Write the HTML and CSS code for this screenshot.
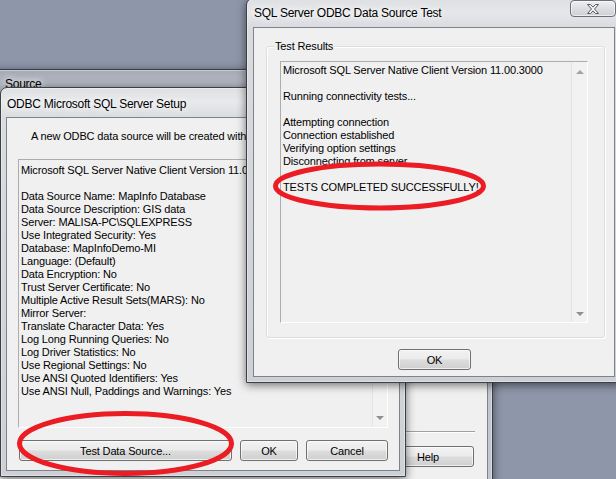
FILE: index.html
```html
<!DOCTYPE html>
<html lang="en">
<head>
<meta charset="utf-8">
<title>ODBC Data Source Test</title>
<link rel="stylesheet" href="styles.css">
</head>
<body>
<div class="desktop">

  <section class="win win-admin">
    <header class="title">Source</header>
    <div class="client admin-client">
      <div class="admin-pane"></div>
      <div class="etched"></div>
      <div class="admin-btns"><button class="btn btn-help">Help</button></div>
    </div>
  </section>

  <section class="win win-setup">
    <header class="title">ODBC Microsoft SQL Server Setup</header>
    <div class="client">
      <div class="intro">A new ODBC data source will be created with the following configuration:</div>
      <div class="textbox setup-box">
        <div class="tb-text">
          <div class="ln">Microsoft SQL Server Native Client Version 11.00.3000</div>
          <div class="ln">&nbsp;</div>
          <div class="ln">Data Source Name: MapInfo Database</div>
          <div class="ln">Data Source Description: GIS data</div>
          <div class="ln">Server: MALISA-PC\SQLEXPRESS</div>
          <div class="ln">Use Integrated Security: Yes</div>
          <div class="ln">Database: MapInfoDemo-MI</div>
          <div class="ln">Language: (Default)</div>
          <div class="ln">Data Encryption: No</div>
          <div class="ln">Trust Server Certificate: No</div>
          <div class="ln">Multiple Active Result Sets(MARS): No</div>
          <div class="ln">Mirror Server:</div>
          <div class="ln">Translate Character Data: Yes</div>
          <div class="ln">Log Long Running Queries: No</div>
          <div class="ln">Log Driver Statistics: No</div>
          <div class="ln">Use Regional Settings: No</div>
          <div class="ln">Use ANSI Quoted Identifiers: Yes</div>
          <div class="ln">Use ANSI Null, Paddings and Warnings: Yes</div>
        </div>
        <div class="scroll setup-scroll"><span class="arrow-up"></span><span class="arrow-down"></span></div>
      </div>
      <div class="setup-btns">
        <button class="btn btn-test">Test Data Source...</button>
        <button class="btn btn-ok">OK</button>
        <button class="btn btn-cancel">Cancel</button>
      </div>
    </div>
  </section>

  <section class="win win-test">
    <header class="title">SQL Server ODBC Data Source Test</header>
    <div class="close">
      <svg width="12" height="10" viewBox="0 0 12 10"><path d="M0.5 0.5h3l2.5 2.6 2.5-2.6h3l-4 4.5 4 4.5h-3l-2.5-2.6-2.5 2.6h-3l4-4.5z" fill="#f4f4f4" stroke="#5a5c61" stroke-width="1" stroke-linejoin="round"/></svg>
    </div>
    <div class="client">
      <div class="group">
        <span class="group-label">Test Results</span>
        <div class="textbox test-box">
          <div class="tb-text">
            <div class="ln">Microsoft SQL Server Native Client Version 11.00.3000</div>
            <div class="ln">&nbsp;</div>
            <div class="ln">Running connectivity tests...</div>
            <div class="ln">&nbsp;</div>
            <div class="ln">Attempting connection</div>
            <div class="ln">Connection established</div>
            <div class="ln">Verifying option settings</div>
            <div class="ln">Disconnecting from server</div>
            <div class="ln">&nbsp;</div>
            <div class="ln">TESTS COMPLETED SUCCESSFULLY!</div>
          </div>
          <div class="scroll test-scroll"><span class="arrow-up"></span><span class="arrow-down"></span></div>
        </div>
      </div>
      <div class="test-btns"><button class="btn btn-ok2">OK</button></div>
    </div>
  </section>

  <svg class="marks" width="616" height="479" viewBox="0 0 616 479">
    <ellipse cx="379.5" cy="186" rx="104" ry="22" fill="none" stroke="#ec1c24" stroke-width="5"/>
    <ellipse cx="125.5" cy="443.5" rx="106" ry="30" fill="none" stroke="#ec1c24" stroke-width="5"/>
  </svg>
</div>
</body>
</html>
```

FILE: styles.css
```css
*, *::before, *::after { box-sizing: border-box; }

html, body { margin: 0; padding: 0; }

body {
  width: 616px;
  height: 479px;
  overflow: hidden;
  background: #8e97aa;
  font-family: "Liberation Sans", Arial, sans-serif;
  font-size: 11px;
  letter-spacing: -0.14px;
  color: #000;
}

.desktop {
  position: relative;
  width: 616px;
  height: 479px;
  overflow: hidden;
}

/* ---------- window frames ---------- */
.win {
  position: absolute;
  display: flex;
  flex-direction: column;
  border: 1px solid #3c3f46;
  border-radius: 7px 7px 0 0;
  box-shadow: inset 0 0 0 1px rgba(255,255,255,0.35), 0 2px 10px rgba(0,0,0,0.55);
}

.win-admin {
  left: -30px;
  top: 69px;
  width: 523px;
  height: 420px;
  padding: 0 4px 4px;
  background: linear-gradient(#a6abb6, #bcc0c8 30px, #c3c7ce);
}

.win-setup {
  left: 0;
  top: 87px;
  width: 406px;
  height: 390px;
  padding: 0 5px 5px;
  background: linear-gradient(#dfe0e3, #e8e9eb 14px, #d9dbdf 30px, #cdd0d5);
}

.win-test {
  left: 246px;
  top: -2px;
  width: 376px;
  height: 385px;
  padding: 0 6px 5px;
  background: linear-gradient(#dfe0e3, #e6e7ea 14px, #d9dbdf 28px, #cdd0d5);
}

.title {
  flex: none;
  display: flex;
  align-items: center;
  font-size: 12px;
  letter-spacing: -0.25px;
  white-space: nowrap;
  text-shadow: 0 0 6px #fff, 0 0 10px #fff;
}

.win-admin .title { height: 30px; padding: 0 0 3px 30px; }
.win-setup .title { height: 29px; padding: 3px 0 0 1px; }
.win-test .title { height: 28px; padding: 0 0 0 1px; }

.client {
  flex: 1;
  display: flex;
  flex-direction: column;
  background: #f0f0f0;
  border: 1px solid #7d828b;
  min-height: 0;
}

/* ---------- close button ---------- */
.close {
  position: absolute;
  top: 1px;
  right: 5px;
  width: 46px;
  height: 17px;
  display: flex;
  align-items: center;
  justify-content: center;
  border: 1px solid #6c6f76;
  border-radius: 4px;
  background: linear-gradient(#eeeff1, #dcdee2 50%, #cdd0d4);
  box-shadow: inset 0 0 0 1px rgba(255,255,255,0.6);
}

/* ---------- buttons ---------- */
.btn {
  font: inherit;
  letter-spacing: inherit;
  color: #000;
  height: 21px;
  padding: 0;
  border: 1px solid #707070;
  border-radius: 3px;
  background: linear-gradient(#f2f2f2, #ebebeb 48%, #dddddd 52%, #cfcfcf);
  box-shadow: inset 0 0 0 1px rgba(255,255,255,0.65);
}

/* ---------- text boxes ---------- */
.textbox {
  display: flex;
  flex: none;
  border: 1px solid;
  border-color: #abadb3 #fff #fff #abadb3;
  background: #f0f0f0;
}

.tb-text {
  flex: 1;
  overflow: hidden;
  white-space: nowrap;
  line-height: 13px;
}

.ln { height: 13px; }

.scroll {
  flex: none;
  display: flex;
  flex-direction: column;
  align-items: center;
  justify-content: space-between;
  border-left: 1px solid #e3e4e6;
  background: #f2f2f2;
}

.arrow-up {
  width: 0;
  height: 0;
  border-left: 4px solid transparent;
  border-right: 4px solid transparent;
  border-bottom: 4px solid #a3a3a3;
}

.arrow-down {
  width: 0;
  height: 0;
  border-left: 4px solid transparent;
  border-right: 4px solid transparent;
  border-top: 4px solid #8f8f8f;
}

/* ---------- admin (back) window ---------- */
.admin-pane { flex: none; height: 330px; }

.etched {
  flex: none;
  margin: 0 12px 0 20px;
  border-top: 1px solid #a0a0a0;
  border-bottom: 1px solid #fff;
}

.admin-btns {
  display: flex;
  justify-content: flex-end;
  padding: 13px 13px 0 0;
}

.btn-help { width: 92px; }

/* ---------- setup window ---------- */
.intro {
  margin: 12px 0 0 24px;
  line-height: 13px;
  white-space: nowrap;
}

.setup-box {
  margin: 16px 0 0 11px;
  width: 370px;
  height: 269px;
}

.setup-box .tb-text { padding: 4px 2px; }

.setup-scroll { width: 15px; padding: 8px 0 7px; }

.setup-btns {
  display: flex;
  gap: 8px;
  margin-top: 12px;
  padding-left: 12px;
}

.btn-test { width: 213px; }
.btn-ok { width: 58px; }
.btn-cancel { width: 82px; }

/* ---------- test window ---------- */
.group {
  position: relative;
  flex: none;
  margin: 18px 0 0 12px;
  width: 339px;
  border: 1px solid #d5dfe5;
  border-radius: 3px;
  padding: 14px 16px 14px 13px;
  box-shadow: inset 1px 1px 0 #fff, 1px 1px 0 #fff;
}

.group-label {
  position: absolute;
  top: -7px;
  left: 7px;
  padding: 0 1px;
  line-height: 13px;
  background: #f0f0f0;
}

.test-box {
  width: 308px;
  height: 262px;
}

.test-box .tb-text { padding: 2px 2px; }

.test-scroll { width: 16px; padding: 8px 0 6px; }

.test-btns {
  display: flex;
  margin-top: 11px;
  padding-left: 144px;
}

.btn-ok2 { width: 73px; }

/* ---------- annotation marks ---------- */
.marks {
  position: absolute;
  left: 0;
  top: 0;
  pointer-events: none;
}
```
